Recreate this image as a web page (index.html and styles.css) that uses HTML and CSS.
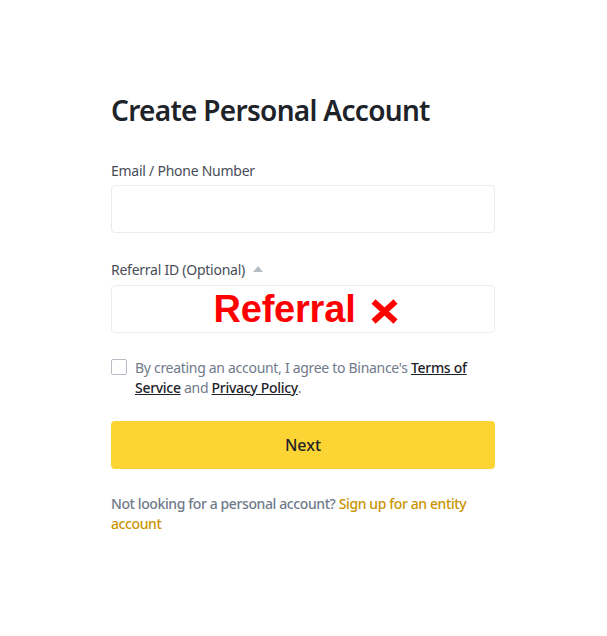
FILE: index.html
```html
<!DOCTYPE html>
<html>
<head>
<meta charset="utf-8">
<link rel="stylesheet" href="styles.css">
</head>
<body>
<div class="page">
  <div class="form">
    <h1 class="title">Create Personal Account</h1>
    <div class="field field-email">
      <div class="label">Email / Phone Number</div>
      <div class="input"></div>
    </div>
    <div class="field field-ref">
      <div class="label label-ref">Referral ID (Optional) <span class="caret"></span></div>
      <div class="input input-ref"><span class="ref-text">Referral</span><svg class="ref-x" width="29" height="25" viewBox="0 0 29 25"><path d="M3.5 2.5 L25.5 22.5 M25.5 2.5 L3.5 22.5" stroke="#ff0000" stroke-width="6" stroke-linecap="butt" fill="none"/></svg></div>
    </div>
    <div class="agree">
      <span class="checkbox"></span>
      <p class="agree-text">By creating an account, I agree to Binance's <a class="ulink">Terms of Service</a> and <a class="ulink">Privacy Policy</a>.</p>
    </div>
    <button class="next">Next</button>
    <p class="entity">Not looking for a personal account? <a class="ylink">Sign up for an entity account</a></p>
  </div>
</div>
</body>
</html>
```
FILE: styles.css
```css
html, body { margin: 0; padding: 0; background: #fff; }
body { font-family: "Noto Sans", "Open Sans", sans-serif; color: #1e2329; }
.page { display: flex; justify-content: center; padding-top: 92px; }
.form { width: 384px; margin-left: -1px; display: flex; flex-direction: column; }
.title { margin: 0; font-size: 28px; line-height: 36px; font-weight: 600; color: #1e2329; letter-spacing: -0.7px; }
.field { display: flex; flex-direction: column; }
.field-email { margin-top: 33px; }
.field-ref { margin-top: 27px; }
.label { font-size: 14px; line-height: 20px; color: #474d57; margin-bottom: 4px; display: flex; align-items: center; letter-spacing: -0.25px; }
.label-ref { margin-bottom: 5px; }
.caret { display: inline-block; width: 0; height: 0; border-left: 5px solid transparent; border-right: 5px solid transparent; border-bottom: 6px solid #b7bdc6; margin-left: 8px; margin-top: -2px; }
.input { height: 46px; border: 1px solid #eaecef; border-radius: 4px; }
.input-ref { display: flex; justify-content: center; align-items: center; }
.ref-text { font-family: "Liberation Sans", Arial, sans-serif; font-weight: 700; font-size: 38px; line-height: 40px; color: #ff0000; letter-spacing: -0.2px; margin-left: 6px; }
.ref-x { margin-left: 14px; margin-top: 4px; }
.agree { display: flex; margin-top: 25px; }
.checkbox { flex: none; width: 14px; height: 14px; border: 1px solid #b7bdc6; border-radius: 2px; margin-top: 1px; margin-right: 8px; }
.agree-text { margin: 0; font-size: 14px; line-height: 20px; color: #707a8a; letter-spacing: -0.3px; }
.ulink { color: #1e2329; text-decoration: underline; font-weight: 500; }
.next { margin-top: 23px; height: 48px; border: none; border-radius: 4px; background: #fcd535; font-family: inherit; font-size: 16px; color: #1e2329; font-weight: 500; }
.entity { margin: 25px 0 0 0; font-size: 14px; line-height: 20px; color: #707a8a; font-weight: 500; letter-spacing: -0.4px; }
.ylink { color: #c99400; }
```
